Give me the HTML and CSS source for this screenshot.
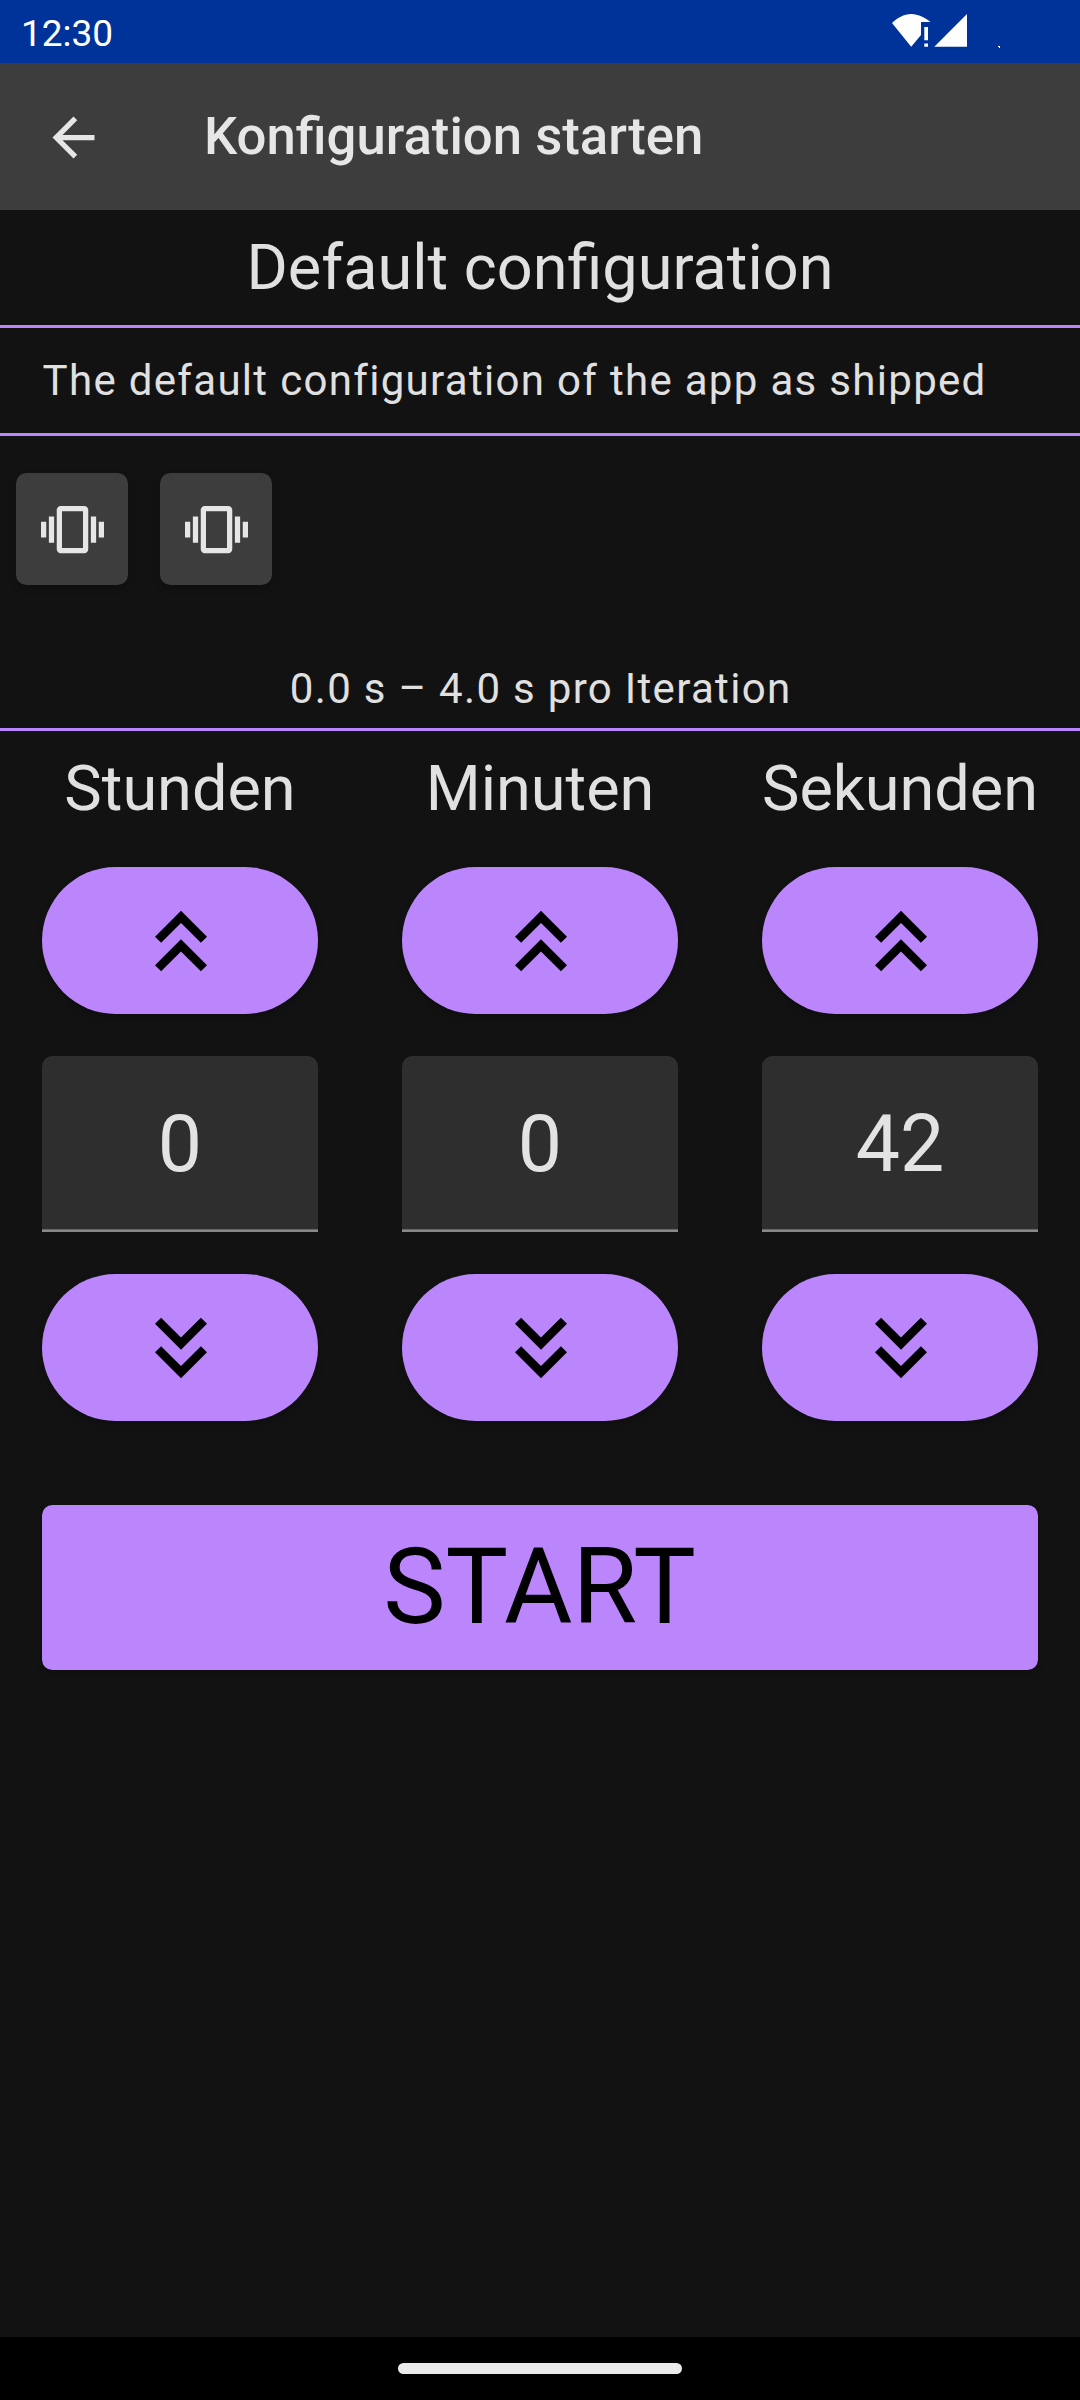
FILE: index.html
```html
<!DOCTYPE html>
<html lang="de">
<head>
<meta charset="utf-8">
<title>Konfiguration starten</title>
<link rel="stylesheet" href="styles.css">
</head>
<body>
<svg class="sprite" aria-hidden="true">
  <symbol id="vibration" viewBox="0 0 24 24"><path d="M0 15h2V9H0v6zM3 17h2V7H3v10zM22 9v6h2V9h-2zM19 17h2V7h-2v10zM16.5 3h-9C6.67 3 6 3.67 6 4.5v15c0 .83.67 1.5 1.5 1.5h9c.83 0 1.5-.67 1.5-1.5v-15c0-.83-.67-1.5-1.5-1.5zM16 19H8V5h8v14z"/></symbol>
  <symbol id="double-up" viewBox="0 0 24 24"><path d="M6 17.59 7.41 19 12 14.42 16.59 19 18 17.59l-6-6zM6 11l1.41 1.41L12 7.83l4.59 4.58L18 11l-6-6z"/></symbol>
  <symbol id="double-down" viewBox="0 0 24 24"><path d="M18 6.41 16.59 5 12 9.58 7.41 5 6 6.41l6 6zM18 13l-1.41-1.41L12 16.17l-4.59-4.58L6 13l6 6z"/></symbol>
</svg>
<div class="screen">
  <div class="status-bar">
    <span class="clock">12:30</span>
    <svg class="status-icons" width="110" height="36" viewBox="0 0 110 36">
      <path d="M0 9C5 4 12 0 19.200 0S33.500 4 38.500 8H29V21L19.200 32.700z"/>
      <path d="M32.300 13h3.700v13.300h-3.700zM32.300 29.500h3.700v3.200h-3.700z"/>
      <path d="M42.300 32.800 75 0V32.800z"/>
      <path d="M106 32h2v2h-1v-1h-1z"/>
    </svg>
  </div>
  <header class="app-bar">
    <svg class="back" viewBox="0 0 24 24"><path d="M20 11H7.83l5.590-5.590L12 4l-8 8 8 8 1.410-1.410L7.830 13H20z"/></svg>
    <h1 class="title">Konfiguration starten</h1>
  </header>
  <main class="content">
    <h2 class="name">Default configuration</h2>
    <p class="description">The default configuration of the app as shipped</p>
    <div class="chips">
      <div class="chip"><svg class="chip-icon"><use href="#vibration"/></svg></div>
      <div class="chip"><svg class="chip-icon"><use href="#vibration"/></svg></div>
    </div>
    <p class="duration">0.0 s – 4.0 s pro Iteration</p>
    <div class="pickers">
      <div class="picker">
        <div class="label">Stunden</div>
        <button class="step"><svg class="step-icon"><use href="#double-up"/></svg></button>
        <div class="field">0</div>
        <button class="step"><svg class="step-icon"><use href="#double-down"/></svg></button>
      </div>
      <div class="picker">
        <div class="label">Minuten</div>
        <button class="step"><svg class="step-icon"><use href="#double-up"/></svg></button>
        <div class="field">0</div>
        <button class="step"><svg class="step-icon"><use href="#double-down"/></svg></button>
      </div>
      <div class="picker">
        <div class="label">Sekunden</div>
        <button class="step"><svg class="step-icon"><use href="#double-up"/></svg></button>
        <div class="field">42</div>
        <button class="step"><svg class="step-icon"><use href="#double-down"/></svg></button>
      </div>
    </div>
    <button class="start">START</button>
  </main>
  <div class="nav-bar"><div class="handle"></div></div>
</div>
</body>
</html>
```

FILE: styles.css
```css
* { box-sizing: border-box; }
body { margin: 0; background: #121212; font-family: Roboto, "Liberation Sans", sans-serif; color: #e0e0e0; }
h1, h2, p { margin: 0; font-weight: 400; }
button { border: 0; padding: 0; font: inherit; color: #000; background: #bb86fc; }
svg { display: block; }
.sprite { display: none; }
.screen { width: 1080px; height: 2400px; display: flex; flex-direction: column; }

.status-bar { height: 63px; background: #003399; color: #fff; display: flex; justify-content: space-between; align-items: flex-start; padding: 14px 78px 0 21px; }
.clock { font-size: 37px; line-height: 39px; }
.status-icons { fill: #fff; }

.app-bar { height: 147px; background: #3d3d3d; display: flex; align-items: center; padding-left: 42px; }
.back { width: 63px; height: 63px; margin-top: 1px; fill: #e6e6e6; }
.title { margin: -1px 0 0 99px; font-size: 52.7px; font-weight: 500; line-height: 63px; color: #e6e6e6; }

.content { flex: 1; }
.name { height: 118px; border-bottom: 3px solid #bb86fc; line-height: 115px; font-size: 63px; text-align: center; }
.description { height: 108px; border-bottom: 3px solid #bb86fc; line-height: 105px; font-size: 42px; letter-spacing: 1.3125px; padding-left: 42.6px; }
.chips { display: flex; gap: 32px; padding: 37px 16px 64px; }
.chip { width: 112px; height: 112px; padding: 25px; border-radius: 10.5px; background: #3d3d3d; box-shadow: 0 3px 8px rgba(0, 0, 0, .2); }
.chip-icon { width: 63px; height: 63px; fill: #e6e6e6; }
.duration { height: 82px; border-bottom: 3px solid #bb86fc; line-height: 79px; font-size: 42px; letter-spacing: 1.3125px; text-align: center; padding-left: 1.3px; }

.pickers { display: grid; grid-template-columns: repeat(3, 276px); gap: 84px; padding: 0 42px; }
.picker { display: flex; flex-direction: column; }
.label { height: 136px; line-height: 115px; font-size: 63px; text-align: center; white-space: nowrap; }
.step { height: 147px; border-radius: 73.5px; display: flex; align-items: center; justify-content: center; padding-left: 1px; box-shadow: 0 4px 8px rgba(0, 0, 0, .2); }
.step-icon { width: 104px; height: 104px; }
.field { height: 176px; margin: 42px 0; border-radius: 10.5px 10.5px 0 0; background: #2e2e2e; box-shadow: inset 0 -2px #888, inset 0 -3px #666; line-height: 176px; font-size: 78.75px; text-align: center; color: #e3e3e3; }
.start { display: block; width: 996px; height: 165px; margin: 84px 42px 0; border-radius: 10.5px; font-size: 105px; line-height: 165px; padding-right: 1px; box-shadow: 0 4px 8px rgba(0, 0, 0, .2); }

.nav-bar { height: 63px; background: #000; display: flex; justify-content: center; padding-top: 26px; }
.handle { width: 284px; height: 11px; border-radius: 5.5px; background: #ebebeb; }
```
